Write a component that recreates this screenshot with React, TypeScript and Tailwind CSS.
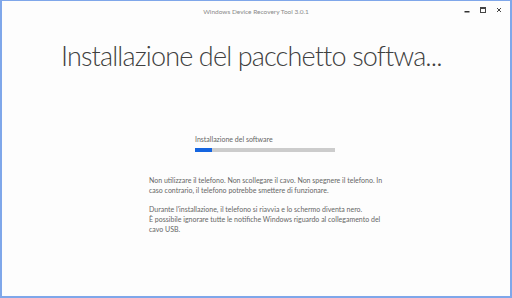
import React from 'react';

const App: React.FC = () => {
    const font = { fontFamily: 'Lato, "Noto Sans", sans-serif' };

    return (
        <div
            className="w-[512px] h-[298px] bg-[#fdfdfd] border-x-2 border-b-2 border-t border-[#7fa7ea] flex flex-col overflow-hidden"
            style={font}
        >
            {/* Title bar */}
            <div className="relative h-[20px] flex items-center justify-center">
                <span className="text-[6.5px] text-[#8a8a8a] mt-[1px]">Windows Device Recovery Tool 3.0.1</span>
                <div className="absolute right-[8px] top-[6px] flex items-center gap-[10px]">
                    <svg width="6" height="6" viewBox="0 0 6 6">
                        <rect x="0.5" y="4" width="5" height="1.5" fill="#333" />
                    </svg>
                    <svg width="6" height="6" viewBox="0 0 6 6">
                        <rect x="0.5" y="0.5" width="5" height="5" fill="none" stroke="#444" strokeWidth="1" />
                        <rect x="0.5" y="0.5" width="5" height="1.5" fill="#444" />
                    </svg>
                    <svg width="6" height="6" viewBox="0 0 6 6">
                        <path d="M1 1 L5 5 M5 1 L1 5" stroke="#444" strokeWidth="1" />
                    </svg>
                </div>
            </div>

            {/* Heading */}
            <h1 className="mt-[15px] pl-[59px] text-[27px] leading-[40px] font-light tracking-[-0.85px] text-[#404040] whitespace-nowrap">
                Installazione del pacchetto softwa...
            </h1>

            {/* Progress */}
            <div className="mt-[59px] ml-[193px] w-[140px]">
                <div className="text-[7px] leading-[9px] text-[#666666]">Installazione del software</div>
                <div className="mt-[4px] h-[4px] bg-[#cccccc] flex">
                    <div className="w-[17px] bg-[#1565e0]" />
                </div>
            </div>

            {/* Info text */}
            <div className="mt-[23px] ml-[147px] w-[236px] text-[7px] leading-[10px] text-[#666666]">
                <p>
                    Non utilizzare il telefono. Non scollegare il cavo. Non spegnere il telefono. In caso contrario, il telefono potrebbe smettere di funzionare.
                </p>
                <p className="mt-[9px]">
                    Durante l'installazione, il telefono si riavvia e lo schermo diventa nero.
                    <br />
                    È possibile ignorare tutte le notifiche Windows riguardo al collegamento del cavo USB.
                </p>
            </div>
        </div>
    );
};

export default App;
